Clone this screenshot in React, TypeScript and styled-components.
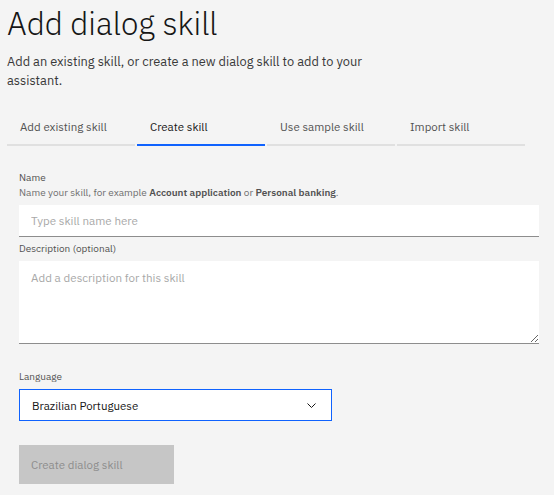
import styled, { createGlobalStyle } from "styled-components";
import { useState } from "react";

const GlobalStyle = createGlobalStyle`
  html, body {
    margin: 0;
    padding: 0;
    background: #f4f4f4;
  }
  body {
    font-family: "IBM Plex Sans", "Noto Sans", "Liberation Sans", sans-serif;
    color: #161616;
  }
  * { box-sizing: border-box; }
`;

const Page = styled.div`
  width: 554px;
  height: 495px;
  padding: 0 0 0 7px;
  overflow: hidden;
`;

const Title = styled.h1`
  margin: 0;
  padding-top: 2px;
  font-size: 31.5px;
  font-weight: 300;
  line-height: 44px;
  color: #161616;
`;

const Subtitle = styled.p`
  margin: 6px 0 0;
  width: 365px;
  font-size: 12.8px;
  line-height: 19px;
  color: #393939;
`;

const TabList = styled.div`
  display: flex;
  gap: 2px;
  margin-top: 22px;
`;

const Tab = styled.button<{ $active?: boolean }>`
  width: 128px;
  height: 34px;
  padding: 0 0 4px 13px;
  border: 0;
  border-bottom: 2px solid ${(p) => (p.$active ? "#0f62fe" : "#e0e0e0")};
  background: transparent;
  font-family: inherit;
  font-size: 11.5px;
  text-align: left;
  color: ${(p) => (p.$active ? "#161616" : "#525252")};
  cursor: pointer;
`;

const Form = styled.div`
  display: flex;
  flex-direction: column;
  padding: 24px 15px 0 12px;
`;

const Field = styled.div<{ $gap?: number }>`
  display: flex;
  flex-direction: column;
  margin-top: ${(p) => p.$gap ?? 0}px;
`;

const Label = styled.label`
  font-size: 10px;
  line-height: 15px;
  color: #525252;
`;

const Helper = styled.div`
  font-size: 10px;
  line-height: 15px;
  color: #6f6f6f;
  margin-bottom: 5px;
  b {
    font-weight: 600;
    color: #525252;
  }
`;

const TextInput = styled.input`
  height: 32px;
  width: 100%;
  padding: 0 12px;
  border: 0;
  border-bottom: 1px solid #8d8d8d;
  background: #fff;
  font-family: inherit;
  font-size: 11.6px;
  color: #161616;
  outline: none;
  &::placeholder { color: #a8a8a8; }
`;

const TextArea = styled.textarea`
  height: 83px;
  width: 100%;
  margin-top: 5px;
  padding: 9px 12px;
  border: 0;
  border-bottom: 1px solid #8d8d8d;
  background: #fff;
  font-family: inherit;
  font-size: 11.6px;
  color: #161616;
  outline: none;
  resize: vertical;
  display: block;
  &::placeholder { color: #a8a8a8; }
`;

const SelectBox = styled.div`
  display: flex;
  align-items: center;
  justify-content: space-between;
  width: 313px;
  height: 32px;
  margin-top: 5px;
  padding: 0 15px 0 12px;
  background: #fff;
  border: 1px solid #0f62fe;
  font-size: 11.5px;
  color: #161616;
`;

const Button = styled.button`
  width: 155px;
  height: 39px;
  margin-top: 24px;
  padding: 0 12px;
  border: 0;
  background: #c6c6c6;
  color: #8d8d8d;
  font-family: inherit;
  font-size: 11.5px;
  text-align: left;
  cursor: not-allowed;
`;

const tabs = ["Add existing skill", "Create skill", "Use sample skill", "Import skill"];

export default function App() {
  const [active, setActive] = useState(1);
  return (
    <Page>
      <GlobalStyle />
      <Title>Add dialog skill</Title>
      <Subtitle>Add an existing skill, or create a new dialog skill to add to your assistant.</Subtitle>
      <TabList>
        {tabs.map((t, i) => (
          <Tab key={t} $active={i === active} onClick={() => setActive(i)}>
            {t}
          </Tab>
        ))}
      </TabList>
      <Form>
        <Field>
          <Label>Name</Label>
          <Helper>
            Name your skill, for example <b>Account application</b> or <b>Personal banking</b>.
          </Helper>
          <TextInput placeholder="Type skill name here" />
        </Field>
        <Field $gap={4}>
          <Label>Description (optional)</Label>
          <TextArea placeholder="Add a description for this skill" />
        </Field>
        <Field $gap={25}>
          <Label>Language</Label>
          <SelectBox>
            <span>Brazilian Portuguese</span>
            <svg width="9" height="5" viewBox="0 0 9 5" fill="none">
              <path d="M0.5 0.5 L4.5 4.5 L8.5 0.5" stroke="#161616" strokeWidth="1" />
            </svg>
          </SelectBox>
        </Field>
        <Button disabled>Create dialog skill</Button>
      </Form>
    </Page>
  );
}
